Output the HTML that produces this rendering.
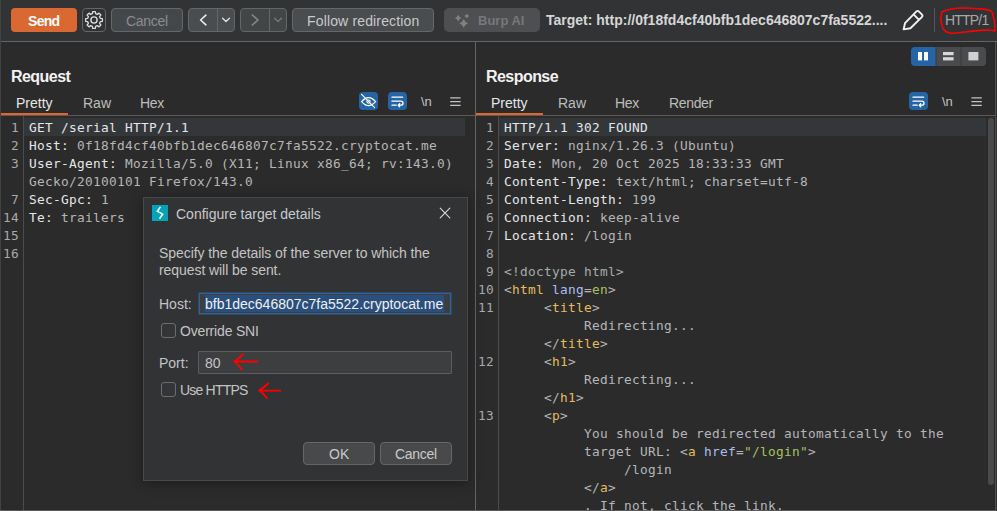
<!DOCTYPE html>
<html><head><meta charset="utf-8"><title>Repeater</title>
<style>
*{box-sizing:border-box;margin:0;padding:0}
html,body{width:997px;height:511px;overflow:hidden;background:#2b2b2b}
body{position:relative;font-family:"Liberation Sans",sans-serif;font-size:14px;color:#c8c8c8}
.a{position:absolute;white-space:pre}
.t{position:absolute;white-space:pre;line-height:1}
.btn{position:absolute;border:1px solid #656667;background:#47494a;border-radius:4px}
.mono{font-family:"DejaVu Sans Mono","Liberation Mono",monospace;font-size:12.8px;letter-spacing:0.295px}
.ln{position:absolute;height:18px;line-height:18px;white-space:pre;color:#b6b6b6}
.ln b{font-weight:normal;color:#e4e6e8}
.num{position:absolute;height:18px;line-height:18px;text-align:right;color:#a9a9a9;white-space:pre}
.tg{color:#e6bb5e}.an{color:#aebcf0}.av{color:#a6c25e}.br{color:#b4b4b4}.dt{color:#a3acac}
</style></head><body>
<!-- toolbar -->
<div class="a" style="left:0;top:0;width:997px;height:41px;background:#323334"></div>
<div class="a" style="left:0;top:41px;width:997px;height:1px;background:#646464"></div>
<div class="a" style="left:0;top:0;width:1px;height:511px;background:#414244"></div>
<div class="a" id="send" style="left:11px;top:8px;width:66px;height:24px;background:#d96833;border-radius:4px"></div>
<div class="t" style="left:28px;top:14px;font-size:14px;font-weight:700;letter-spacing:-0.7px;color:#fff">Send</div>
<div class="btn" style="left:82px;top:8px;width:24px;height:24px;background:#323334"></div>
<div class="btn" style="left:111px;top:8px;width:72px;height:24px;background:#45484a"></div>
<div class="t" style="left:126px;top:14px;font-size:14px;letter-spacing:-0.3px;color:#8b8c8d">Cancel</div>
<div class="btn" style="left:188px;top:8px;width:47px;height:24px;background:#4a4d4f"></div>
<div class="a" style="left:217px;top:9px;width:1px;height:22px;background:#656667"></div>
<div class="btn" style="left:240px;top:8px;width:47px;height:24px;background:#434647"></div>
<div class="a" style="left:269px;top:9px;width:1px;height:22px;background:#656667"></div>
<div class="btn" style="left:292px;top:8px;width:142px;height:24px;background:#4a4d4f"></div>
<div class="t" style="left:307px;top:14px;font-size:14px;letter-spacing:0.15px;color:#c9c9c9">Follow redirection</div>
<div class="a" style="left:444px;top:8px;width:96px;height:24px;background:#4e4f50;border-radius:5px"></div>
<div class="t" style="left:478px;top:14px;font-size:13px;font-weight:700;color:#77787a">Burp AI</div>
<div class="t" style="left:546px;top:13px;font-size:14px;font-weight:700;color:#d6d6d6">Target: http://0f18fd4cf40bfb1dec646807c7fa5522....</div>
<div class="a" style="left:934px;top:8px;width:1px;height:24px;background:#55565a"></div>
<div class="t" style="left:945px;top:13px;font-size:14px;letter-spacing:-0.8px;color:#a8a8a8">HTTP/1</div>
<svg class="a" id="icons-top" style="left:0;top:0" width="997" height="42" viewBox="0 0 997 42" fill="none">
<path d="M92.36 13.71 L92.67 11.60 L95.33 11.60 L95.64 13.71 L97.29 14.39 L99.00 13.12 L100.88 15.00 L99.61 16.71 L100.29 18.36 L102.40 18.67 L102.40 21.33 L100.29 21.64 L99.61 23.29 L100.88 25.00 L99.00 26.88 L97.29 25.61 L95.64 26.29 L95.33 28.40 L92.67 28.40 L92.36 26.29 L90.71 25.61 L89.00 26.88 L87.12 25.00 L88.39 23.29 L87.71 21.64 L85.60 21.33 L85.60 18.67 L87.71 18.36 L88.39 16.71 L87.12 15.00 L89.00 13.12 L90.71 14.39Z" stroke="#dcdcdc" stroke-width="1.3" stroke-linejoin="round"/>
<circle cx="94" cy="20" r="3.1" stroke="#dcdcdc" stroke-width="1.4"/>
<path d="M205.9 15.2 L200.6 20 L205.9 24.8" stroke="#ececec" stroke-width="1.6" stroke-linecap="round" stroke-linejoin="round"/>
<path d="M222.6 18.2 L226 21.6 L229.4 18.2" stroke="#dedede" stroke-width="1.4" stroke-linecap="round" stroke-linejoin="round"/>
<path d="M252.3 15 L258 20 L252.3 25" stroke="#8a8b8c" stroke-width="1.5" stroke-linecap="round" stroke-linejoin="round"/>
<path d="M274.6 18.2 L278 21.6 L281.4 18.2" stroke="#7a7b7c" stroke-width="1.3" stroke-linecap="round" stroke-linejoin="round"/>
<path d="M458.20 14.80 Q459.12 17.18 461.50 18.10 Q459.12 19.02 458.20 21.40 Q457.28 19.02 454.90 18.10 Q457.28 17.18 458.20 14.80Z" fill="#808182"/>
<path d="M466.80 13.40 Q467.53 15.27 469.40 16.00 Q467.53 16.73 466.80 18.60 Q466.07 16.73 464.20 16.00 Q466.07 15.27 466.80 13.40Z" fill="#808182"/>
<path d="M463.70 18.90 Q464.93 22.07 468.10 23.30 Q464.93 24.53 463.70 27.70 Q462.47 24.53 459.30 23.30 Q462.47 22.07 463.70 18.90Z" fill="#808182"/>
<path d="M903.6 29.4 L905 23.2 L916.2 11.6 Q917.6 10.2 919 11.6 L921.8 14.4 Q923.2 15.8 921.8 17.2 L910.4 28.2 Z M913.6 14.4 L919 19.8" stroke="#f2f2f2" stroke-width="1.9" stroke-linejoin="round" stroke-linecap="round"/>
<path d="M942.2 11.6 Q948.8 9.0 956.5 8.3 Q964.2 7.7 971.4 8.2 Q978.6 8.8 985.0 9.4 Q991.3 10.1 992.1 12.2 Q992.9 14.3 993.8 18.2 Q994.6 22.1 994.9 25.6 Q995.1 29.2 994.9 30.9 Q994.6 32.5 994.0 31.1 Q993.5 29.8 987.1 30.1 Q980.8 30.3 972.5 31.1 Q964.2 32 958.7 32.8 Q953.2 33.6 949.9 33.0 Q946.6 32.5 944.7 30.6 Q942.7 28.7 941.9 25.4 Q941.1 22.1 940.9 19.3 Q940.7 16.5 941.5 14.1 L942.2 11.6" stroke="#ff0000" stroke-width="1.6" stroke-linecap="round" stroke-linejoin="round"/>
</svg>

<!-- panels -->
<div class="a" style="left:475px;top:42px;width:1px;height:469px;background:#646464"></div>
<div class="a" style="left:0;top:510px;width:997px;height:1px;background:#585858"></div>
<div class="a" style="left:995px;top:42px;width:1px;height:469px;background:#4e4e4e"></div><div class="a" style="left:996px;top:42px;width:1px;height:469px;background:#313131"></div>

<div class="t" style="left:11px;top:69px;font-size:16px;font-weight:700;letter-spacing:-0.55px;color:#f2f2f2">Request</div>
<div class="t" style="left:486px;top:69px;font-size:16px;font-weight:700;letter-spacing:-0.55px;color:#f2f2f2">Response</div>

<div class="t" style="left:16px;top:96px;color:#e6e6e6">Pretty</div>
<div class="t" style="left:83px;top:96px;color:#bdbdbd">Raw</div>
<div class="t" style="left:140px;top:96px;letter-spacing:-0.3px;color:#bdbdbd">Hex</div>
<div class="t" style="left:491px;top:96px;color:#e6e6e6">Pretty</div>
<div class="t" style="left:558px;top:96px;color:#bdbdbd">Raw</div>
<div class="t" style="left:615px;top:96px;letter-spacing:-0.3px;color:#bdbdbd">Hex</div>
<div class="t" style="left:669px;top:96px;letter-spacing:-0.35px;color:#bdbdbd">Render</div>

<div class="a" style="left:1px;top:115px;width:474px;height:1px;background:#5a5a5a"></div>
<div class="a" style="left:476px;top:115px;width:519px;height:1px;background:#5a5a5a"></div>
<div class="a" style="left:1px;top:113px;width:67px;height:2px;background:#e0662e"></div>
<div class="a" style="left:476px;top:113px;width:67px;height:2px;background:#e0662e"></div>

<!-- gutters -->
<div class="a" style="left:23px;top:116px;width:1px;height:394px;background:#4c4c4c"></div>
<div class="a" style="left:498px;top:116px;width:1px;height:394px;background:#4c4c4c"></div>
<div class="a" style="left:24px;top:118px;width:441px;height:18px;background:#33373a"></div>
<div class="a" style="left:499px;top:118px;width:487px;height:18px;background:#33373a"></div>
<div class="a" style="left:988px;top:118px;width:6px;height:367px;background:#4a4a4a;border-radius:3px"></div>

<div class="t" style="left:421px;top:95px;font-size:13px;color:#c4c4c4">\n</div>
<div class="t" style="left:942px;top:95px;font-size:13px;color:#c4c4c4">\n</div>
<div id="req" class="mono">
<div class="num" style="left:1px;top:119px;width:18px">1</div>
<div class="ln" style="left:29px;top:119px"><b>GET /serial HTTP/1.1</b></div>
<div class="num" style="left:1px;top:137px;width:18px">2</div>
<div class="ln" style="left:29px;top:137px"><b>Host:</b> 0f18fd4cf40bfb1dec646807c7fa5522.cryptocat.me</div>
<div class="num" style="left:1px;top:155px;width:18px">3</div>
<div class="ln" style="left:29px;top:155px"><b>User-Agent:</b> Mozilla/5.0 (X11; Linux x86_64; rv:143.0)</div>
<div class="ln" style="left:29px;top:173px">Gecko/20100101 Firefox/143.0</div>
<div class="num" style="left:1px;top:191px;width:18px">7</div>
<div class="ln" style="left:29px;top:191px"><b>Sec-Gpc:</b> 1</div>
<div class="num" style="left:1px;top:209px;width:18px">14</div>
<div class="ln" style="left:29px;top:209px"><b>Te:</b> trailers</div>
<div class="num" style="left:1px;top:227px;width:18px">15</div>
<div class="num" style="left:1px;top:245px;width:18px">16</div>
</div><!--/req-->
<div id="res" class="mono">
<div class="num" style="left:476px;top:119px;width:18px">1</div>
<div class="ln" style="left:504px;top:119px"><b>HTTP/1.1 302 FOUND</b></div>
<div class="num" style="left:476px;top:137px;width:18px">2</div>
<div class="ln" style="left:504px;top:137px"><b>Server:</b> nginx/1.26.3 (Ubuntu)</div>
<div class="num" style="left:476px;top:155px;width:18px">3</div>
<div class="ln" style="left:504px;top:155px"><b>Date:</b> Mon, 20 Oct 2025 18:33:33 GMT</div>
<div class="num" style="left:476px;top:173px;width:18px">4</div>
<div class="ln" style="left:504px;top:173px"><b>Content-Type:</b> text/html; charset=utf-8</div>
<div class="num" style="left:476px;top:191px;width:18px">5</div>
<div class="ln" style="left:504px;top:191px"><b>Content-Length:</b> 199</div>
<div class="num" style="left:476px;top:209px;width:18px">6</div>
<div class="ln" style="left:504px;top:209px"><b>Connection:</b> keep-alive</div>
<div class="num" style="left:476px;top:227px;width:18px">7</div>
<div class="ln" style="left:504px;top:227px"><b>Location:</b> /login</div>
<div class="num" style="left:476px;top:245px;width:18px">8</div>
<div class="num" style="left:476px;top:263px;width:18px">9</div>
<div class="ln" style="left:504px;top:263px"><span class="dt">&lt;!doctype html&gt;</span></div>
<div class="num" style="left:476px;top:281px;width:18px">10</div>
<div class="ln" style="left:504px;top:281px"><span class="br">&lt;</span><span class="tg">html</span> <span class="an">lang</span><span class="br">=</span><span class="av">en</span><span class="br">&gt;</span></div>
<div class="num" style="left:476px;top:299px;width:18px">11</div>
<div class="ln" style="left:504px;top:299px">     <span class="br">&lt;</span><span class="tg">title</span><span class="br">&gt;</span></div>
<div class="ln" style="left:504px;top:317px">          Redirecting...</div>
<div class="ln" style="left:504px;top:335px">     <span class="br">&lt;/</span><span class="tg">title</span><span class="br">&gt;</span></div>
<div class="num" style="left:476px;top:353px;width:18px">12</div>
<div class="ln" style="left:504px;top:353px">     <span class="br">&lt;</span><span class="tg">h1</span><span class="br">&gt;</span></div>
<div class="ln" style="left:504px;top:371px">          Redirecting...</div>
<div class="ln" style="left:504px;top:389px">     <span class="br">&lt;/</span><span class="tg">h1</span><span class="br">&gt;</span></div>
<div class="num" style="left:476px;top:407px;width:18px">13</div>
<div class="ln" style="left:504px;top:407px">     <span class="br">&lt;</span><span class="tg">p</span><span class="br">&gt;</span></div>
<div class="ln" style="left:504px;top:425px">          You should be redirected automatically to the</div>
<div class="ln" style="left:504px;top:443px">          target URL: <span class="br">&lt;</span><span class="tg">a</span> <span class="an">href</span><span class="br">=</span><span class="av">"/login"</span><span class="br">&gt;</span></div>
<div class="ln" style="left:504px;top:461px">               /login</div>
<div class="ln" style="left:504px;top:479px">          <span class="br">&lt;/</span><span class="tg">a</span><span class="br">&gt;</span></div>
<div class="ln" style="left:504px;top:497px">          . If not, click the link.</div>
</div><!--/res-->
<svg class="a" id="icons-mid" style="left:0;top:42px" width="997" height="74" viewBox="0 42 997 74" fill="none">
<rect x="359" y="92" width="19" height="18" rx="4" fill="#2665a5"/>
<path d="M361.6 101.6 Q368.5 93.6 375.6 101.6 Q368.5 109.6 361.6 101.6Z" stroke="#fff" stroke-width="1.2"/><circle cx="368.5" cy="101.6" r="1.6" stroke="#fff" stroke-width="1.1"/><path d="M361.6 94.4 L374.6 107.6" stroke="#fff" stroke-width="1.2" stroke-linecap="round"/>
<rect x="388" y="92" width="19" height="18" rx="4" fill="#2665a5"/><path d="M392 97.2 H402.6 M392 101.2 H400.8 Q403 101.2 403 103.2 Q403 105.2 400.8 105.2 H398.4 M399.7 103.7 L398.2 105.2 L399.7 106.7 M392 105.2 H396.2" stroke="#fff" stroke-width="1.3" stroke-linecap="round" stroke-linejoin="round"/>
<rect x="909" y="92" width="19" height="18" rx="4" fill="#2665a5"/><path d="M913 97.2 H923.6 M913 101.2 H921.8 Q924 101.2 924 103.2 Q924 105.2 921.8 105.2 H919.4 M920.7 103.7 L919.2 105.2 L920.7 106.7 M913 105.2 H917.2" stroke="#fff" stroke-width="1.3" stroke-linecap="round" stroke-linejoin="round"/>
<path d="M450.2 97.8 H460.59999999999997 M450.2 101.6 H460.59999999999997 M450.2 105.4 H460.59999999999997" stroke="#c4c4c4" stroke-width="1.2"/>
<path d="M971.4 97.8 H981.8 M971.4 101.6 H981.8 M971.4 105.4 H981.8" stroke="#c4c4c4" stroke-width="1.2"/>
<path d="M915 47 H936 V66 H915 Q911 66 911 62 V51 Q911 47 915 47Z" fill="#2665a5"/>
<rect x="936" y="47" width="25" height="19" fill="#4a4b4c"/>
<path d="M961 47 H982 Q986 47 986 51 V62 Q986 66 982 66 H961Z" fill="#4a4b4c"/>
<rect x="935.5" y="47" width="1" height="19" fill="#3a3b3c"/><rect x="960.5" y="47" width="1" height="19" fill="#3a3b3c"/>
<rect x="918" y="52" width="4" height="8.4" fill="#fff"/><rect x="924" y="52" width="4" height="8.4" fill="#fff"/>
<rect x="943" y="52" width="10.6" height="3.2" fill="#d8d8d8"/><rect x="943" y="57.2" width="10.6" height="3.2" fill="#d8d8d8"/>
<rect x="968.4" y="52" width="10" height="8.4" fill="#d0d0d0"/>
</svg>

<!-- dialog -->
<div id="dlg" class="a" style="left:143px;top:197px;width:325px;height:284px;background:#323334;border:1px solid #474849;box-shadow:0 2px 12px 1px rgba(0,0,0,.3)"></div>
<div class="a" style="left:152px;top:205px;width:16px;height:16px;background:#04a3b9"></div>
<div class="t" style="left:176px;top:207px;color:#c9c9c9">Configure target details</div>
<div class="t" style="left:159px;top:246px;letter-spacing:-0.07px;color:#c4c4c4">Specify the details of the server to which the</div>
<div class="t" style="left:159px;top:263px;letter-spacing:-0.07px;color:#c4c4c4">request will be sent.</div>
<div class="t" style="left:159px;top:297px;color:#c4c4c4">Host:</div>
<div class="a" style="left:198px;top:292px;width:254px;height:22.5px;background:#3d3e40;border:1px solid #2c4a6e;border-radius:1px;box-shadow:inset 0 0 0 1px #315f96"></div>
<div class="a" style="left:204.5px;top:295px;width:239.5px;height:17px;background:#2a4f7d"></div>
<div class="t" style="left:205px;top:297px;color:#f0f0f0">bfb1dec646807c7fa5522.cryptocat.me</div>
<div class="a" style="left:161px;top:323px;width:15px;height:15px;border:1px solid #6c6d6e;border-radius:3px;background:#343536"></div>
<div class="t" style="left:180px;top:324px;letter-spacing:-0.18px;color:#c4c4c4">Override SNI</div>
<div class="t" style="left:159px;top:356px;color:#c4c4c4">Port:</div>
<div class="a" style="left:198px;top:351px;width:254px;height:23px;background:#3d3e40;border:1px solid #5c5d5e;border-radius:1px"></div>
<div class="t" style="left:205px;top:356px;color:#c4c4c4">80</div>
<div class="a" style="left:161px;top:382px;width:15px;height:15px;border:1px solid #6c6d6e;border-radius:3px;background:#343536"></div>
<div class="t" style="left:180px;top:383px;letter-spacing:-0.8px;color:#c4c4c4">Use HTTPS</div>
<div class="btn" style="left:303px;top:442px;width:72px;height:23px"></div>
<div class="t" style="left:329px;top:447px;color:#c9c9c9">OK</div>
<div class="btn" style="left:380px;top:442px;width:72px;height:23px"></div>
<div class="t" style="left:395px;top:447px;letter-spacing:-0.3px;color:#c9c9c9">Cancel</div>
<svg class="a" id="icons-dlg" style="left:143px;top:197px" width="325" height="284" viewBox="143 197 325 284" fill="none">
<path d="M160.5 206.9 L157.3 211.2 L162.7 214.2 L159.5 218.7" stroke="#fff" stroke-width="1.5" stroke-linejoin="miter" stroke-linecap="butt"/>
<path d="M440.2 208.2 L449.8 217.8 M449.8 208.2 L440.2 217.8" stroke="#dadada" stroke-width="1.1" stroke-linecap="round"/>
<path d="M257.2 361.5 L234.6 361.5 M242.8 354.3 Q239 358.5 234.4 361.4 Q238.5 365 241.8 369.4" stroke="#ff0000" stroke-width="1.9" stroke-linecap="round" stroke-linejoin="round"/>
<path d="M280.3 390.6 L259.4 390.4 M268 383.5 Q264.5 387.5 259.2 390.3 Q263.5 393.5 266.9 398" stroke="#ff0000" stroke-width="1.9" stroke-linecap="round" stroke-linejoin="round"/>
</svg>
</body></html>
